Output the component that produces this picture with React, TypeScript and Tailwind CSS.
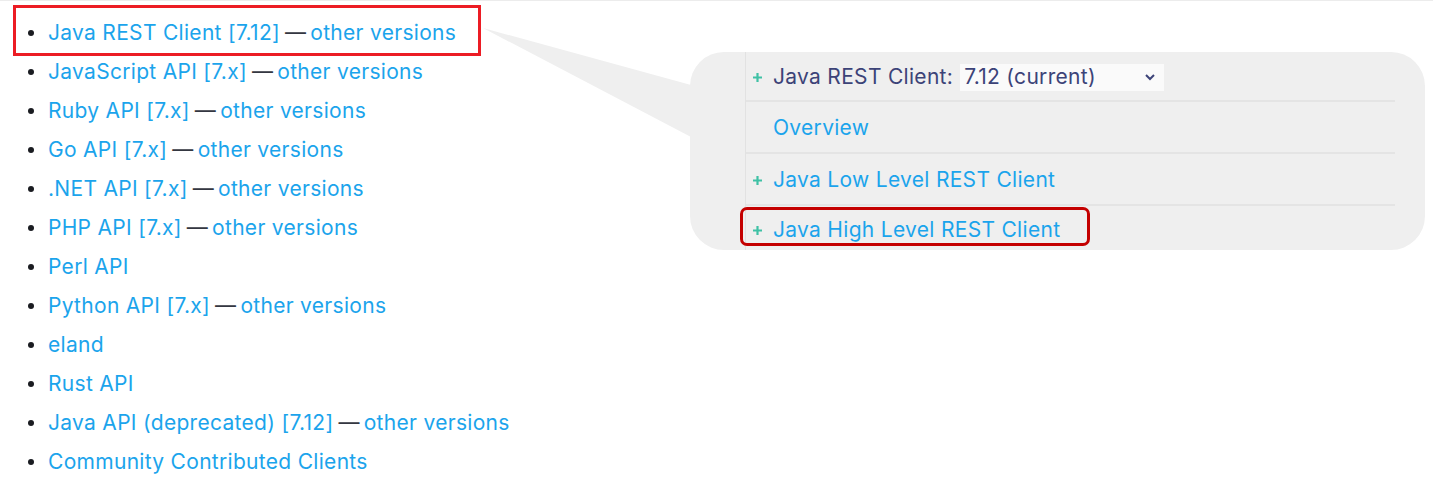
import React from "react";

const items: { name: string; other?: boolean }[] = [
  { name: "Java REST Client [7.12]", other: true },
  { name: "JavaScript API [7.x]", other: true },
  { name: "Ruby API [7.x]", other: true },
  { name: "Go API [7.x]", other: true },
  { name: ".NET API [7.x]", other: true },
  { name: "PHP API [7.x]", other: true },
  { name: "Perl API" },
  { name: "Python API [7.x]", other: true },
  { name: "eland" },
  { name: "Rust API" },
  { name: "Java API (deprecated) [7.12]", other: true },
  { name: "Community Contributed Clients" },
];

function Plus() {
  return (
    <svg width="11" height="11" viewBox="0 0 11 11" className="shrink-0 w-[11px] h-[11px]">
      <path d="M5.5 1v9M1 5.5h9" stroke="#3fc1a5" strokeWidth="2.2" />
    </svg>
  );
}

export default function App() {
  return (
    <div
      className="relative w-[1433px] h-[478px] bg-white border-t border-[#ececec] overflow-hidden"
      style={{ fontFamily: "Inter, 'Noto Sans', sans-serif" }}
    >
      <div className="flex">
        <ul className="pt-[12px] w-[690px] shrink-0">
          {items.map((it) => (
            <li key={it.name} className="flex items-center h-[39px] text-[21px] tracking-[0.3px] text-[#1ba4ec]">
              <span className="ml-[28px] mr-[14px] w-[6px] h-[6px] rounded-full bg-[#1a1c21]" />
              <span>{it.name}</span>
              {it.other && (
                <>
                  <span className="text-[#343741] ml-[5px] mr-[4px]">—</span>
                  <span>other versions</span>
                </>
              )}
            </li>
          ))}
        </ul>

        <div className="relative mt-[51px] w-[735px] h-[198px] rounded-[34px] bg-[#efefef] pl-[55px] pr-[30px] shrink-0">
          <div className="border-l border-[#e2e2e2] h-full flex flex-col text-[21px] tracking-[0.3px]">
            <div className="h-[50px] flex items-center pl-[6px] pt-[2px] border-b-2 border-[#e4e4e4]">
              <Plus />
              <span className="ml-[10px] text-[#3c4378]">Java REST Client:</span>
              <div className="ml-[7px] w-[204px] h-[27px] bg-[#fafafa] flex items-center justify-between pl-[4px] pr-[8px] text-[#3c4378]">
                <span>7.12 (current)</span>
                <svg width="12" height="8" viewBox="0 0 12 8">
                  <path d="M2 2l4 4 4-4" stroke="#3c4378" strokeWidth="2" fill="none" />
                </svg>
              </div>
            </div>
            <div className="h-[52px] flex items-center pl-[27px] pt-[2px] border-b-2 border-[#e4e4e4] text-[#1ba4ec]">
              Overview
            </div>
            <div className="h-[52px] flex items-center pl-[6px] pt-[2px] border-b-2 border-[#e4e4e4] text-[#1ba4ec]">
              <Plus />
              <span className="ml-[10px]">Java Low Level REST Client</span>
            </div>
            <div className="flex-1 flex items-center pl-[6px] pt-[4px] text-[#1ba4ec]">
              <Plus />
              <span className="ml-[10px]">Java High Level REST Client</span>
            </div>
          </div>
          <div className="absolute left-[50px] top-[155px] w-[350px] h-[39px] border-[3px] border-[#c40000] rounded-[7px]" />
        </div>
      </div>

      <svg className="absolute left-0 top-0 pointer-events-none" width="1433" height="478">
        <polygon points="483,27 691,84 691,136" fill="#efefef" />
      </svg>

      <div className="absolute left-[13px] top-[4px] w-[468px] h-[51px] border-[3px] border-[#ec1c24]" />
    </div>
  );
}
